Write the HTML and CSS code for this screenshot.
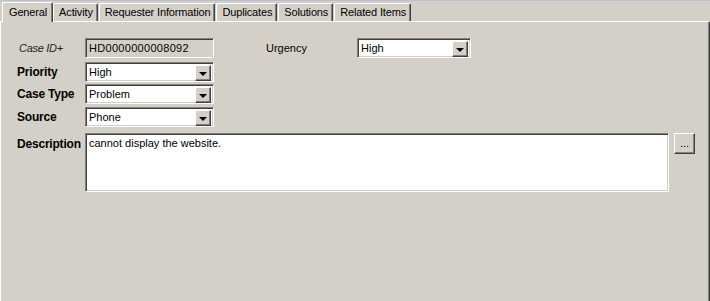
FILE: index.html
```html
<!DOCTYPE html>
<html lang="en">
<head>
    <meta charset="UTF-8">
    <title>Case</title>
    <link rel="stylesheet" href="styles.css">
</head>
<body>
    <div class="window">
        <div class="tabs">
            <div class="tab active">General</div>
            <div class="tab">Activity</div>
            <div class="tab">Requester Information</div>
            <div class="tab">Duplicates</div>
            <div class="tab">Solutions</div>
            <div class="tab">Related Items</div>
        </div>

        <div class="panel">
            <div class="row first">
                <span class="label italic">Case ID+</span>
                <div class="field disabled wide">HD0000000008092</div>
                <span class="label plain urgency-label">Urgency</span>
                <div class="field combo narrow">
                    <span class="value">High</span>
                    <span class="drop"><i></i></span>
                </div>
            </div>
            <div class="row tight">
                <span class="label">Priority</span>
                <div class="field combo wide">
                    <span class="value">High</span>
                    <span class="drop"><i></i></span>
                </div>
            </div>
            <div class="row">
                <span class="label">Case Type</span>
                <div class="field combo wide">
                    <span class="value">Problem</span>
                    <span class="drop"><i></i></span>
                </div>
            </div>
            <div class="row">
                <span class="label">Source</span>
                <div class="field combo wide">
                    <span class="value">Phone</span>
                    <span class="drop"><i></i></span>
                </div>
            </div>
            <div class="row desc">
                <span class="label">Description</span>
                <textarea class="field memo">cannot display the website.</textarea>
                <button class="more">...</button>
            </div>
        </div>
    </div>
</body>
</html>
```

FILE: styles.css
```css
/* Classic grey dialog */
* {
    margin: 0;
    padding: 0;
    box-sizing: border-box;
}

body {
    background: #d4d0c8;
    font-family: 'Liberation Sans', Arial, sans-serif;
    font-size: 11px;
    color: #000;
    width: 710px;
    height: 301px;
    overflow: hidden;
}

.window {
    border-top: 1px solid #b9bfd5;
    height: 301px;
    display: flex;
    flex-direction: column;
}

/* Tabs */
.tabs {
    display: flex;
    align-items: flex-end;
    height: 20px;
    padding-left: 3px;
    position: relative;
    z-index: 1;
}

.tab {
    height: 18px;
    line-height: 16px;
    padding: 0 4px 0 5px;
    border-top: 1px solid #fff;
    border-left: 1px solid #fff;
    border-right: 1px solid #404040;
    box-shadow: inset -1px 0 #808080;
    border-radius: 2px 2px 0 0;
    white-space: nowrap;
    margin-right: 1px;
    letter-spacing: -0.15px;
}

.tab.active {
    height: 20px;
    line-height: 19px;
    padding: 0 5px 0 6px;
    margin-bottom: -1px;
    margin-left: -1px;
    margin-right: 0;
    background: #d4d0c8;
}

.panel {
    flex: 1;
    border-top: 1px solid #fff;
    border-left: 1px solid #fff;
    border-right: 1px solid #404040;
    box-shadow: inset -1px 0 #808080;
    padding: 16px 0 0 16px;
}

/* Form rows */
.row {
    display: flex;
    align-items: center;
    height: 20px;
    margin-bottom: 3px;
}

.row.first {
    margin-bottom: 4px;
}

.row.tight {
    margin-bottom: 2px;
}

.row.desc {
    align-items: flex-start;
    height: auto;
    margin-top: 6px;
}

.label {
    width: 68px;
    font-weight: bold;
    font-size: 12px;
    letter-spacing: -0.2px;
}

.desc .label {
    padding-top: 4px;
}

.label.italic {
    font-weight: normal;
    font-style: italic;
    font-size: 11px;
    color: #222;
    padding-left: 2px;
    letter-spacing: -0.3px;
}

.label.plain {
    font-weight: normal;
    font-size: 11px;
    letter-spacing: 0;
}

.urgency-label {
    margin-left: 52px;
    width: 91px;
}

/* Sunken fields */
.field {
    height: 20px;
    background: #fff;
    border: 1px solid;
    border-color: #808080 #fff #fff #808080;
    box-shadow: inset 1px 1px #404040, inset -1px -1px #d4d0c8;
    padding: 2px 2px 0 3px;
    line-height: 15px;
    font-family: inherit;
    font-size: 11px;
}

.field.disabled {
    background: #d4d0c8;
    letter-spacing: 0.3px;
}

.wide {
    width: 129px;
}

.narrow {
    width: 114px;
}

.combo {
    display: flex;
    justify-content: space-between;
    padding: 2px 2px 2px 3px;
}

.drop {
    width: 16px;
    height: 16px;
    background: #d4d0c8;
    border: 1px solid;
    border-color: #fff #404040 #404040 #fff;
    box-shadow: inset -1px -1px #808080;
    display: flex;
    align-items: center;
    justify-content: center;
}

.drop i {
    width: 0;
    height: 0;
    border-left: 4px solid transparent;
    border-right: 4px solid transparent;
    border-top: 4px solid #000;
    margin-top: 1px;
}

.memo {
    width: 584px;
    height: 59px;
    resize: none;
    outline: none;
    overflow: hidden;
}

.more {
    width: 21px;
    height: 21px;
    margin-left: 5px;
    background: #d4d0c8;
    border: 1px solid;
    border-color: #fff #404040 #404040 #fff;
    box-shadow: inset -1px -1px #808080;
    font-family: inherit;
    font-size: 11px;
    line-height: 14px;
    padding-bottom: 2px;
}
```
